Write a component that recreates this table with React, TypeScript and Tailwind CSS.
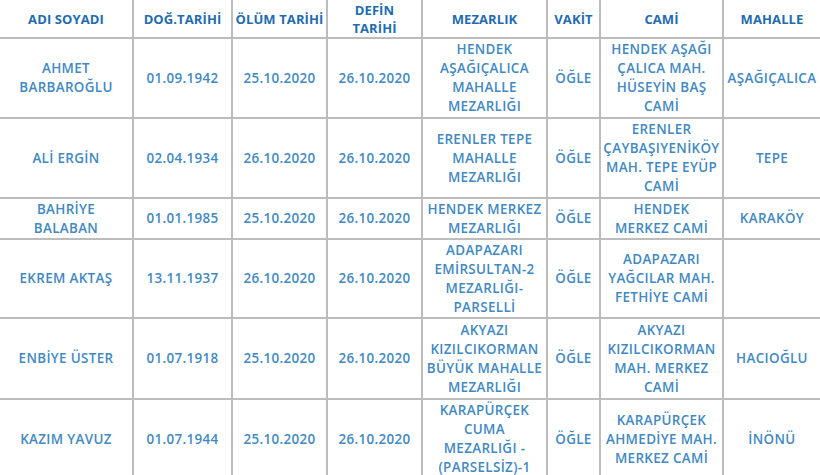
const headers: string[][] = [
  ["ADI SOYADI"],
  ["DOĞ.TARİHİ"],
  ["ÖLÜM TARİHİ"],
  ["DEFİN", "TARİHİ"],
  ["MEZARLIK"],
  ["VAKİT"],
  ["CAMİ"],
  ["MAHALLE"],
];

const widths = ["w-[133px]", "w-[99px]", "w-[95px]", "w-[95px]", "w-[125px]", "w-[53px]", "w-[123px]", "w-[97px]"];

const rows: { h: string; cells: string[][] }[] = [
  {
    h: "h-[80px]",
    cells: [
      ["AHMET", "BARBAROĞLU"],
      ["01.09.1942"],
      ["25.10.2020"],
      ["26.10.2020"],
      ["HENDEK", "AŞAĞIÇALICA", "MAHALLE", "MEZARLIĞI"],
      ["ÖĞLE"],
      ["HENDEK AŞAĞI", "ÇALICA MAH.", "HÜSEYİN BAŞ", "CAMİ"],
      ["AŞAĞIÇALICA"],
    ],
  },
  {
    h: "h-[80px]",
    cells: [
      ["ALİ ERGİN"],
      ["02.04.1934"],
      ["26.10.2020"],
      ["26.10.2020"],
      ["ERENLER TEPE", "MAHALLE", "MEZARLIĞI"],
      ["ÖĞLE"],
      ["ERENLER", "ÇAYBAŞIYENİKÖY", "MAH. TEPE EYÜP", "CAMİ"],
      ["TEPE"],
    ],
  },
  {
    h: "h-[41px]",
    cells: [
      ["BAHRİYE", "BALABAN"],
      ["01.01.1985"],
      ["25.10.2020"],
      ["26.10.2020"],
      ["HENDEK MERKEZ", "MEZARLIĞI"],
      ["ÖĞLE"],
      ["HENDEK", "MERKEZ CAMİ"],
      ["KARAKÖY"],
    ],
  },
  {
    h: "h-[79px]",
    cells: [
      ["EKREM AKTAŞ"],
      ["13.11.1937"],
      ["26.10.2020"],
      ["26.10.2020"],
      ["ADAPAZARI", "EMİRSULTAN-2", "MEZARLIĞI-", "PARSELLİ"],
      ["ÖĞLE"],
      ["ADAPAZARI", "YAĞCILAR MAH.", "FETHİYE CAMİ"],
      [""],
    ],
  },
  {
    h: "h-[81px]",
    cells: [
      ["ENBİYE ÜSTER"],
      ["01.07.1918"],
      ["25.10.2020"],
      ["26.10.2020"],
      ["AKYAZI", "KIZILCIKORMAN", "BÜYÜK MAHALLE", "MEZARLIĞI"],
      ["ÖĞLE"],
      ["AKYAZI", "KIZILCIKORMAN", "MAH. MERKEZ", "CAMİ"],
      ["HACIOĞLU"],
    ],
  },
  {
    h: "h-[80px]",
    cells: [
      ["KAZIM YAVUZ"],
      ["01.07.1944"],
      ["25.10.2020"],
      ["26.10.2020"],
      ["KARAPÜRÇEK", "CUMA", "MEZARLIĞI -", "(PARSELSİZ)-1"],
      ["ÖĞLE"],
      ["KARAPÜRÇEK", "AHMEDİYE MAH.", "MERKEZ CAMİ"],
      ["İNÖNÜ"],
    ],
  },
];

function Lines({ lines }: { lines: string[] }) {
  return (
    <>
      {lines.map((l, i) => (
        <span key={i} className="block whitespace-nowrap">
          {l}
        </span>
      ))}
    </>
  );
}

export default function App() {
  return (
    <div className="w-[820px] h-[475px] overflow-hidden bg-white font-['Open_Sans','Lato',sans-serif]">
      <table className="w-[820px] table-fixed border-collapse">
        <colgroup>
          {widths.map((w, i) => (
            <col key={i} className={w} />
          ))}
        </colgroup>
        <thead>
          <tr className="h-[38px]">
            {headers.map((h, i) => (
              <th
                key={i}
                className={`p-0 text-center align-middle text-[13px] leading-[18px] font-bold tracking-[0.1px] text-[#1f6cb0] border-b-2 border-[#bcbcbc] ${
                  i < 7 ? "border-r-2" : ""
                }`}
              >
                <Lines lines={h} />
              </th>
            ))}
          </tr>
        </thead>
        <tbody>
          {rows.map((r, ri) => (
            <tr key={ri} className={r.h}>
              {r.cells.map((c, ci) => (
                <td
                  key={ci}
                  className={`p-0 text-center align-middle text-[13.4px] leading-[19px] font-semibold tracking-[0.35px] text-[#4289c2] border-b-2 border-[#bcbcbc] ${
                    ci < 7 ? "border-r-2" : ""
                  }`}
                >
                  <Lines lines={c} />
                </td>
              ))}
            </tr>
          ))}
        </tbody>
      </table>
    </div>
  );
}
